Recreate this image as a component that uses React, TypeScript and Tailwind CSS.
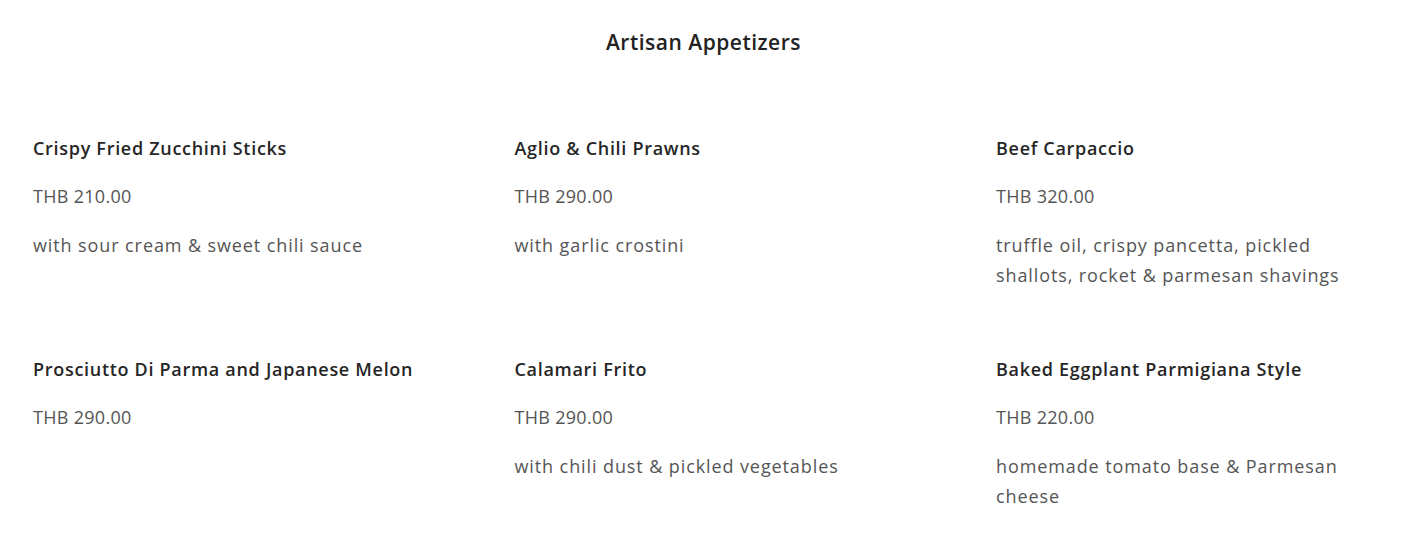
import React from 'react';

const items = [
  { name: 'Crispy Fried Zucchini Sticks', price: 'THB 210.00', desc: 'with sour cream & sweet chili sauce' },
  { name: 'Aglio & Chili Prawns', price: 'THB 290.00', desc: 'with garlic crostini' },
  { name: 'Beef Carpaccio', price: 'THB 320.00', desc: 'truffle oil, crispy pancetta, pickled shallots, rocket & parmesan shavings' },
  { name: 'Prosciutto Di Parma and Japanese Melon', price: 'THB 290.00', desc: '' },
  { name: 'Calamari Frito', price: 'THB 290.00', desc: 'with chili dust & pickled vegetables' },
  { name: 'Baked Eggplant Parmigiana Style', price: 'THB 220.00', desc: 'homemade tomato base & Parmesan cheese' },
];

export default function App() {
  return (
    <div className="min-h-[545px] bg-white font-['Open_Sans',sans-serif]">
      <div className="pt-[27px] pb-10">
        <h2 className="text-center text-[21px] leading-[30px] font-semibold tracking-[0.5px] text-[#222]">Artisan Appetizers</h2>

        <div className="mt-[76px] px-[33px] grid grid-cols-[390px_390px_390px] gap-x-[91.5px] gap-y-[64px]">
          {items.map((item) => (
            <div key={item.name} className="flex flex-col">
              <h3 className="text-[18px] leading-[30px] font-semibold tracking-[0.7px] text-[#262626]">{item.name}</h3>
              <p className="mt-[18px] text-[18px] leading-[30px] tracking-[0.3px] text-[#555]">{item.price}</p>
              {item.desc && (
                <p className="mt-[19px] text-[18px] leading-[30px] tracking-[0.9px] text-[#555]">{item.desc}</p>
              )}
            </div>
          ))}
        </div>
      </div>
    </div>
  );
}
